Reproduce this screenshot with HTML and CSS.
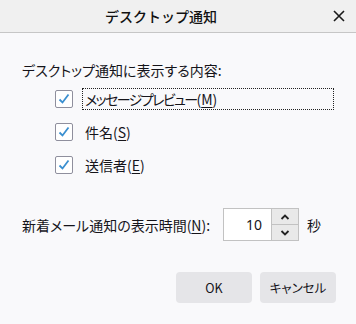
FILE: index.html
```html
<!DOCTYPE html>
<html lang="ja">
<head>
<meta charset="utf-8">
<link rel="stylesheet" href="styles.css">
</head>
<body>
<div class="dialog">
  <div class="titlebar">
    <div class="title">デスクトップ通知</div>
    <div class="close">
      <svg width="12" height="12" viewBox="0 0 12 12"><path d="M1 1 L11 11 M11 1 L1 11" stroke="#1a1a1a" stroke-width="1.6"/></svg>
    </div>
  </div>
  <div class="content">
    <div class="heading">デスクトップ通知に表示する内容:</div>
    <div class="checks">
      <div class="row">
        <span class="box"><svg width="14" height="14" viewBox="0 0 14 14"><path d="M2.5 7.5 L5.5 10.5 L11.5 2.5" fill="none" stroke="#3a8fd0" stroke-width="1.8"/></svg></span>
        <span class="label focus"><span class="kana">メッセージプレビュー</span>(<u>M</u>)</span>
      </div>
      <div class="row">
        <span class="box"><svg width="14" height="14" viewBox="0 0 14 14"><path d="M2.5 7.5 L5.5 10.5 L11.5 2.5" fill="none" stroke="#3a8fd0" stroke-width="1.8"/></svg></span>
        <span class="label">件名(<u>S</u>)</span>
      </div>
      <div class="row">
        <span class="box"><svg width="14" height="14" viewBox="0 0 14 14"><path d="M2.5 7.5 L5.5 10.5 L11.5 2.5" fill="none" stroke="#3a8fd0" stroke-width="1.8"/></svg></span>
        <span class="label">送信者(<u>E</u>)</span>
      </div>
    </div>
    <div class="timerow">
      <span class="tlabel">新着メール通知の表示時間(<u>N</u>):</span>
      <div class="spin">
        <span class="value">10</span>
        <div class="arrows">
          <span class="arr up"><svg width="10" height="6" viewBox="0 0 10 6"><path d="M1.5 5 L5 1.5 L8.5 5" fill="none" stroke="#222" stroke-width="1.8"/></svg></span>
          <span class="arr"><svg width="10" height="6" viewBox="0 0 10 6"><path d="M1.5 1 L5 4.5 L8.5 1" fill="none" stroke="#222" stroke-width="1.8"/></svg></span>
        </div>
      </div>
      <span class="unit">秒</span>
    </div>
    <div class="buttons">
      <button class="btn">OK</button>
      <button class="btn">キャンセル</button>
    </div>
  </div>
</div>
</body>
</html>
```
FILE: styles.css
```css
html, body { margin: 0; padding: 0; }
body {
  width: 356px; height: 324px; overflow: hidden;
  background: #f9f9fb;
  font-family: "Noto Sans CJK JP", "Noto Sans", sans-serif;
  color: #15141a;
  font-size: 14px;
  font-feature-settings: "palt";
}
.dialog { display: flex; flex-direction: column; height: 100%; }
.titlebar {
  height: 32px;
  background: #f0f0f0;
  border-bottom: 1px solid #c6c6c6;
  display: flex; align-items: center;
  position: relative;
}
.title {
  flex: 1; text-align: center;
  padding-right: 34px;
  font-size: 14px; font-weight: 500;
  color: #111;
  font-feature-settings: normal;
}
.close {
  position: absolute; right: 11px; top: 10px;
  width: 12px; height: 12px; display: flex;
}
.content { padding: 0 22px; display: flex; flex-direction: column; }
.heading { margin-top: 27px; line-height: 20px; }
.checks { margin-top: 8px; padding-left: 33px; display: flex; flex-direction: column; gap: 11px; }
.row { display: flex; align-items: center; height: 22px; }
.box {
  width: 18px; height: 18px; box-sizing: border-box;
  border: 1px solid #8f8f9d; border-radius: 2px; background: #fff;
  display: flex; align-items: center; justify-content: center;
}
.label { margin-left: 9px; padding: 0 2px; line-height: 20px; border: 1px dotted transparent; }
.label.focus { border-color: #222; flex: 0 0 252px; box-sizing: border-box; }
.kana { letter-spacing: -1.6px; }
.timerow { margin-top: 32px; display: flex; align-items: center; }
.tlabel { margin-right: 13px; }
.spin {
  width: 76px; height: 33px; box-sizing: border-box;
  border: 1px solid #c2c2c2; background: #fff;
  display: flex;
}
.value { flex: 1; text-align: right; padding-right: 9px; line-height: 31px; font-family: "Noto Sans", sans-serif; font-size: 14px; }
.arrows { width: 26px; display: flex; flex-direction: column; border-left: 1px solid #c2c2c2; }
.arr { flex: 1; background: #e9e9e9; display: flex; align-items: center; justify-content: center; }
.arr.up { border-bottom: 1px solid #c2c2c2; }
.unit { margin-left: 8px; }
.buttons { margin-top: 31px; display: flex; justify-content: flex-end; gap: 8px; margin-right: -2px; }
.btn {
  width: 76px; height: 31px; border: none; border-radius: 4px;
  background: #e5e5e8; color: #15141a;
  font-family: "Noto Sans CJK JP", "Noto Sans", sans-serif; font-size: 12.5px;
  font-feature-settings: "palt";
  padding: 0;
}
u { text-decoration: underline; text-underline-offset: 2px; }
```
